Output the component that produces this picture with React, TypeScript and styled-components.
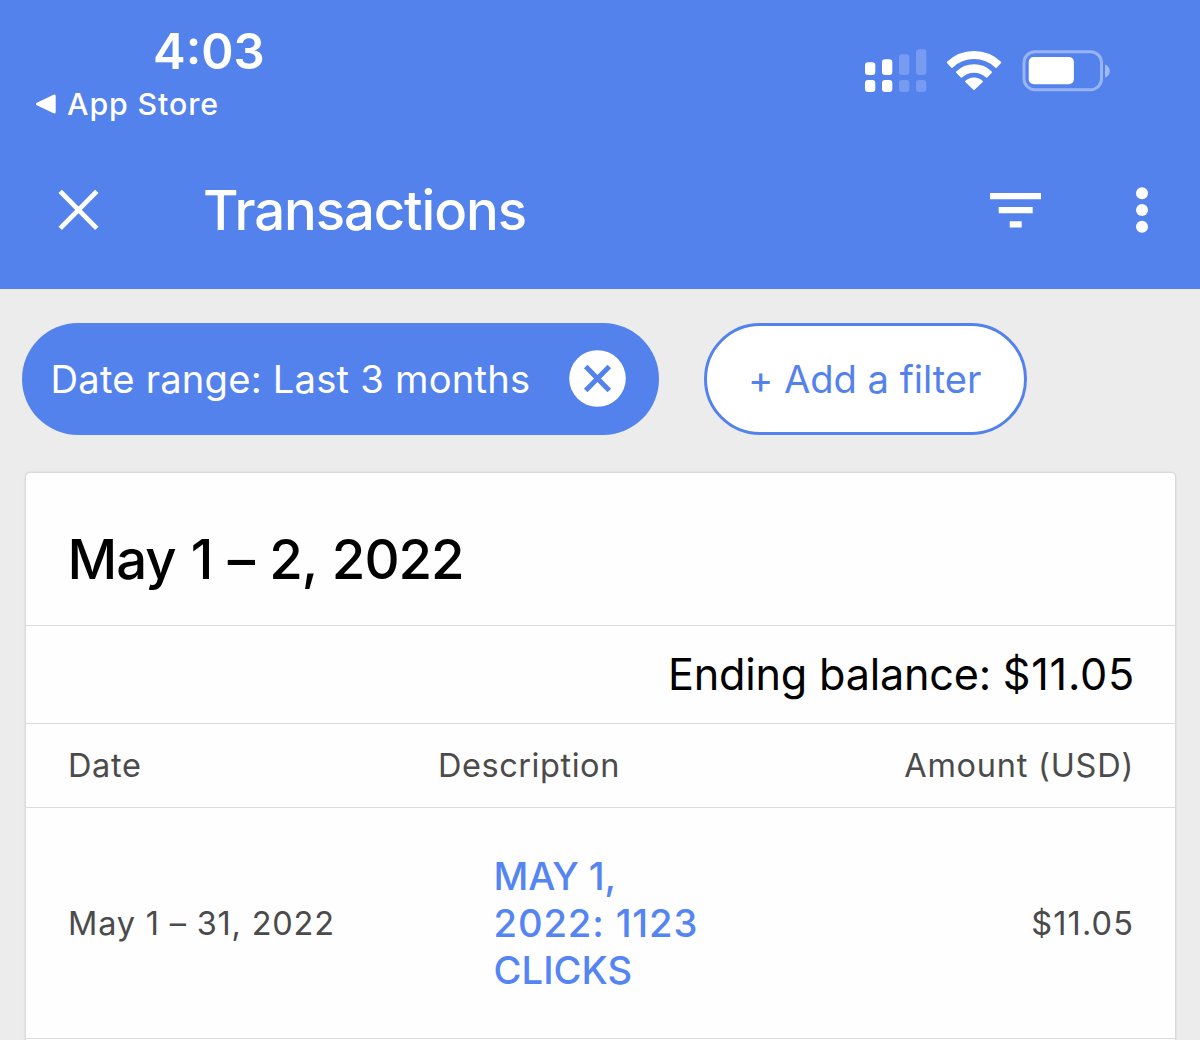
import React from "react";
import styled, { createGlobalStyle } from "styled-components";

const blue = "#5482ed";
const line = "#dcdcdc";

const GlobalStyle = createGlobalStyle`
  *, *::before, *::after { box-sizing: border-box; }
  body {
    margin: 0;
    background: #ececec;
    font-family: Inter, "Liberation Sans", sans-serif;
  }
  button { font: inherit; border: 0; padding: 0; background: none; }
  svg { display: block; }
`;

const Screen = styled.div`
  width: 1200px;
  height: 1040px;
  overflow: hidden;
  display: flex;
  flex-direction: column;
  background: #ececec;
`;

const Header = styled.header`
  flex: none;
  height: 289px;
  display: flex;
  flex-direction: column;
  color: #fff;
  background: ${blue};
`;

const StatusBar = styled.div`
  height: 132px;
  padding: 20px 90px 0 35px;
  display: flex;
  justify-content: space-between;
`;

const ClockColumn = styled.div`
  display: flex;
  flex-direction: column;
`;

const Clock = styled.time`
  padding: 1px 0 0 118px;
  font-size: 49px;
  font-weight: 600;
  line-height: 61px;
`;

const BackLink = styled.a`
  display: flex;
  align-items: center;
  gap: 11px;
  margin-top: 2px;
  font-size: 30.3px;
  font-weight: 450;
  line-height: 40px;
  letter-spacing: 0.9px;
`;

const StatusIcons = styled.div`
  display: flex;
  align-items: flex-start;
  padding-top: 28px;
`;

const SignalIcon = styled.svg`
  margin: 0 19px 0 0;
`;

const WifiIcon = styled.svg`
  margin: 2px 20px 0 0;
`;

const BatteryIcon = styled.svg`
  margin-top: 2px;
`;

const AppBar = styled.div`
  height: 156px;
  padding: 0 51px 0 58px;
  display: flex;
  align-items: center;
`;

const Title = styled.h1`
  flex: 1;
  margin: 0 0 1px 104px;
  font-size: 54.5px;
  font-weight: 500;
  line-height: 70px;
  letter-spacing: -1.1px;
`;

const IconButton = styled.button<{ $gap?: number }>`
  color: inherit;
  margin-left: ${(p) => p.$gap ?? 0}px;
`;

const Filters = styled.div`
  flex: none;
  display: flex;
  gap: 45px;
  padding: 34px 22px 37px;
`;

const Chip = styled.div<{ $outlined?: boolean }>`
  height: 112px;
  display: flex;
  align-items: center;
  border-radius: 56px;
  font-size: 38.2px;
  line-height: 48px;
  white-space: nowrap;
  width: ${(p) => (p.$outlined ? 323 : 637)}px;
  padding-left: ${(p) => (p.$outlined ? 41 : 28.5)}px;
  letter-spacing: ${(p) => (p.$outlined ? "-0.05px" : "0.2px")};
  color: ${(p) => (p.$outlined ? blue : "#fff")};
  background: ${(p) => (p.$outlined ? "#fff" : blue)};
  border: ${(p) => (p.$outlined ? `3px solid ${blue}` : "0")};
`;

const ChipLabel = styled.span`
  flex: 1;
`;

const ChipClose = styled.button`
  margin: 0 33px 1px 0;
  color: ${blue};
`;

const Card = styled.main`
  flex: 1;
  margin: 0 24px 0 25px;
  background: #fefefe;
  border: 1px solid #dadada;
  border-bottom: 0;
  border-radius: 5px 5px 0 0;
  box-shadow: 0 0 2px rgba(0, 0, 0, 0.12);
`;

const Period = styled.h2`
  height: 153px;
  margin: 0;
  padding: 51px 42px 0 41.5px;
  border-bottom: 1px solid ${line};
  color: #000;
  font-size: 54.5px;
  font-weight: 500;
  line-height: 70px;
  letter-spacing: -1.05px;
  word-spacing: 1.8px;
`;

const Balance = styled.div`
  height: 98px;
  padding: 0 40px 1px 0;
  display: flex;
  align-items: center;
  justify-content: flex-end;
  border-bottom: 1px solid ${line};
  color: #000;
  font-size: 43.2px;
  white-space: pre;
`;

const BalanceLabel = styled.span`
  letter-spacing: -0.22px;
`;

const BalanceAmount = styled.span`
  letter-spacing: 0.75px;
`;

const Row = styled.div<{ $height: number }>`
  height: ${(p) => p.$height}px;
  display: grid;
  grid-template-columns: 370px 1fr 400px;
  align-items: center;
  padding: 1px 41px 0 42px;
  border-bottom: 1px solid ${line};
  color: #4b4b4b;
  font-size: 32.5px;
  line-height: 42px;
`;

const Cell = styled.span<{ $track?: number; $end?: boolean }>`
  letter-spacing: ${(p) => p.$track ?? 0.65}px;
  text-align: ${(p) => (p.$end ? "right" : "left")};
`;

const Description = styled.a`
  display: flex;
  flex-direction: column;
  padding-left: 55.5px;
  color: #5485f2;
  font-size: 38.2px;
  font-weight: 500;
  line-height: 46.8px;
  white-space: nowrap;
`;

const DescriptionLine = styled.span<{ $track: number }>`
  letter-spacing: ${(p) => p.$track}px;
`;

const signalBars = [
  { x: 0, top: 13, on: true },
  { x: 17, top: 10, on: true },
  { x: 34, top: 5, on: false },
  { x: 51, top: 0, on: false },
];

function Signal() {
  return (
    <SignalIcon width="62" height="45" viewBox="0 0 62 45" fill="#fff">
      {signalBars.map((b) => (
        <g key={b.x} opacity={b.on ? 1 : 0.2}>
          <rect x={b.x} y={b.top + 1.3} width="10.3" height={25.7 - b.top} rx="3" />
          <rect x={b.x} y="32" width="10.3" height="12" rx="3" />
        </g>
      ))}
    </SignalIcon>
  );
}

function Wifi() {
  return (
    <WifiIcon width="56" height="42" viewBox="0 0 56 42" fill="#fff" stroke="#fff" strokeWidth="1.6" strokeLinejoin="round">
      <path d="M1.6 12.4A38.2 38.2 0 0 1 54.4 12.4L50 17.1A31.8 31.8 0 0 0 6 17.1Z" />
      <path d="M10.8 22.1A24.8 24.8 0 0 1 45.2 22.1L40.6 26.9A18.2 18.2 0 0 0 15.4 26.9Z" />
      <path d="M19.8 31.5A11.8 11.8 0 0 1 36.2 31.5L28 39.2Z" />
    </WifiIcon>
  );
}

function Battery() {
  return (
    <BatteryIcon width="88" height="42" viewBox="0 0 88 42">
      <rect x="2" y="1.7" width="77.5" height="38" rx="11" fill="none" stroke="#fff" strokeOpacity="0.4" strokeWidth="3" />
      <path d="M83 14.5C86 15.5 87.8 18 87.8 21S86 26.5 83 27.5Z" fill="#fff" fillOpacity="0.45" />
      <rect x="6.7" y="7" width="45.2" height="27.2" rx="5" fill="#fff" />
    </BatteryIcon>
  );
}

export default function App() {
  return (
    <Screen>
      <GlobalStyle />
      <Header>
        <StatusBar>
          <ClockColumn>
            <Clock>4:03</Clock>
            <BackLink>
              <svg width="21" height="22" viewBox="0 0 21 22" fill="#fff" stroke="#fff" strokeWidth="3" strokeLinejoin="round">
                <path d="M2.5 11L19.2 3V19Z" />
              </svg>
              App Store
            </BackLink>
          </ClockColumn>
          <StatusIcons>
            <Signal />
            <Wifi />
            <Battery />
          </StatusIcons>
        </StatusBar>
        <AppBar>
          <IconButton aria-label="Close">
            <svg width="41" height="42" viewBox="0 0 41 42" stroke="#fff" strokeWidth="4.8">
              <path d="M2.2 2.4L38.8 39.4M38.8 2.4L2.2 39.4" />
            </svg>
          </IconButton>
          <Title>Transactions</Title>
          <IconButton aria-label="Filter">
            <svg width="51" height="36" viewBox="0 0 51 36" fill="#fff">
              <path d="M0 1H51V7.3H0ZM8.7 15H42.7V21.3H8.7ZM19.7 29.2H31.7V35.5H19.7Z" />
            </svg>
          </IconButton>
          <IconButton aria-label="More" $gap={94}>
            <svg width="14" height="46" viewBox="0 0 14 46" fill="#fff">
              <circle cx="7" cy="6.2" r="6" />
              <circle cx="7" cy="23" r="6" />
              <circle cx="7" cy="39.8" r="6" />
            </svg>
          </IconButton>
        </AppBar>
      </Header>
      <Filters>
        <Chip>
          <ChipLabel>Date range: Last 3 months</ChipLabel>
          <ChipClose aria-label="Remove filter">
            <svg width="57" height="57" viewBox="0 0 57 57">
              <circle cx="28.5" cy="28.5" r="28.3" fill="#fff" />
              <path d="M16.7 16.5L40.3 40.5M40.3 16.5L16.7 40.5" stroke="currentColor" strokeWidth="5" />
            </svg>
          </ChipClose>
        </Chip>
        <Chip $outlined>+ Add a filter</Chip>
      </Filters>
      <Card>
        <Period>May 1 – 2, 2022</Period>
        <Balance>
          <BalanceLabel>Ending balance: </BalanceLabel>
          <BalanceAmount>$11.05</BalanceAmount>
        </Balance>
        <Row $height={84}>
          <Cell>Date</Cell>
          <Cell $track={0.55}>Description</Cell>
          <Cell $end $track={0.75}>Amount (USD)</Cell>
        </Row>
        <Row $height={231}>
          <Cell $track={0.8}>May 1 – 31, 2022</Cell>
          <Description>
            <DescriptionLine $track={-0.13}>MAY 1,</DescriptionLine>
            <DescriptionLine $track={0.86}>2022: 1123</DescriptionLine>
            <DescriptionLine $track={0.02}>CLICKS</DescriptionLine>
          </Description>
          <Cell $end $track={1.1}>$11.05</Cell>
        </Row>
      </Card>
    </Screen>
  );
}
